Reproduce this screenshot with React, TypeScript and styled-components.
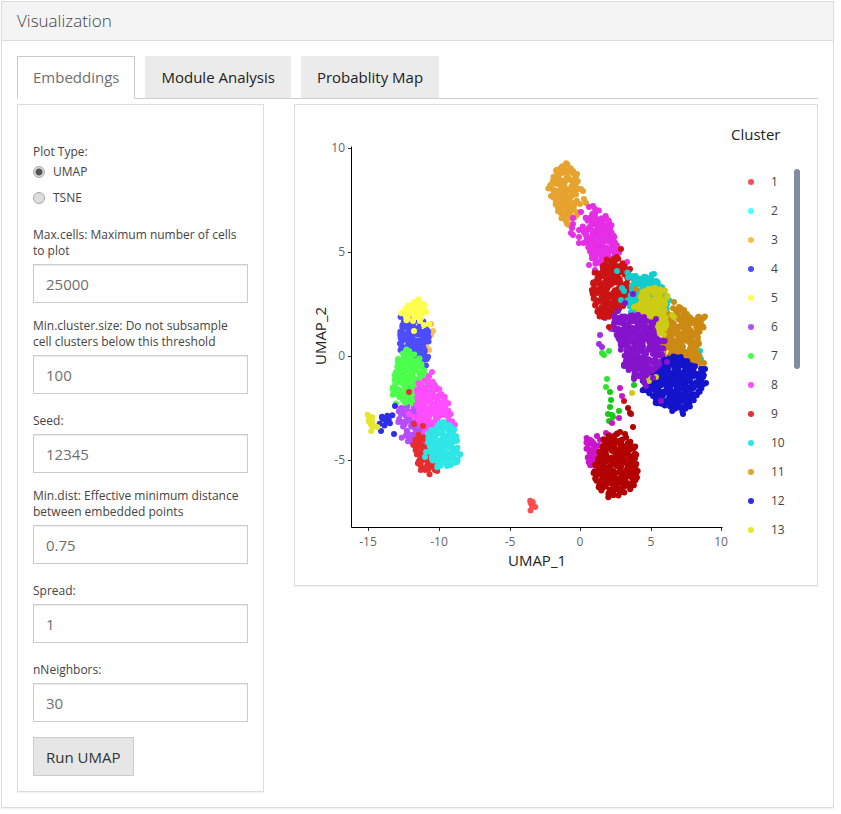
import React, { useState } from "react";
import styled, { createGlobalStyle } from "styled-components";

const GlobalStyle = createGlobalStyle`
  *, *::before, *::after { box-sizing: border-box; }
  body {
    margin: 0;
    background: #ffffff;
    color: #444444;
    font-family: "Open Sans", "Noto Sans", sans-serif;
    font-size: 12px;
    line-height: 16px;
  }
`;

const Panel = styled.section`
  margin: 1px 7px 6px 1px;
  border: 1px solid #dddddd;
  background: #ffffff;
  box-shadow: 0 1px 1px rgba(0, 0, 0, 0.05);
`;

const PanelHeader = styled.header`
  padding: 8px 15px 9px;
  border-bottom: 1px solid #dddddd;
  background: #f4f4f4;
`;

const PanelTitle = styled.h1`
  margin: 0;
  color: #444444;
  font-size: 17px;
  font-weight: 300;
  line-height: 21px;
`;

const PanelBody = styled.div`
  padding: 15px;
`;

const Tabs = styled.div`
  display: flex;
  gap: 10px;
  margin-bottom: 5px;
  border-bottom: 1px solid #cccccc;
`;

const Tab = styled.button<{ $active: boolean }>`
  height: 43px;
  margin-bottom: -1px;
  padding: 0 15px;
  border: 1px solid ${(p) => (p.$active ? "#cccccc" : "#ebebeb")};
  border-bottom-color: ${(p) => (p.$active ? "#ffffff" : "#cccccc")};
  background: ${(p) => (p.$active ? "#ffffff" : "#ebebeb")};
  color: ${(p) => (p.$active ? "#6f6f6f" : "#222222")};
  font-family: inherit;
  font-size: 15px;
  line-height: 21px;
  cursor: pointer;
`;

const Columns = styled.div`
  display: flex;
  align-items: flex-start;
  gap: 30px;
`;

const Card = styled.div`
  border: 1px solid #dddddd;
  background: #ffffff;
  box-shadow: 0 1px 1px rgba(0, 0, 0, 0.05);
`;

const FormCard = styled(Card)`
  flex: 0 0 247px;
  padding: 39px 15px 15px;
`;

const ChartCard = styled(Card)`
  flex: 1;
  min-width: 0;
  display: flex;
  align-items: flex-start;
`;

const RadioGroup = styled.fieldset`
  margin: 0 0 11px;
  padding: 0;
  border: 0;
`;

const Legend = styled.legend`
  padding: 0;
  margin-bottom: 4px;
`;

const RadioLabel = styled.label`
  display: flex;
  align-items: center;
  gap: 8px;
  height: 16px;
  margin-bottom: 10px;
`;

const Radio = styled.input`
  appearance: none;
  width: 12px;
  height: 12px;
  margin: 0;
  border: 1px solid #a6a6a6;
  border-radius: 50%;
  background: #dedede;

  &:checked {
    background: radial-gradient(circle, #555555 0 3px, #dedede 4px);
  }
`;

const Field = styled.div`
  margin-bottom: 15px;
`;

const FieldLabel = styled.label`
  display: flex;
  align-items: flex-end;
  min-height: 20px;
  margin-bottom: 5px;
`;

const TextBox = styled.input`
  display: block;
  width: 100%;
  height: 39px;
  padding: 8px 12px;
  border: 1px solid #cccccc;
  border-radius: 0;
  box-shadow: inset 0 1px 1px rgba(0, 0, 0, 0.08);
  color: #6f6f6f;
  font-family: inherit;
  font-size: 15px;
`;

const RunButton = styled.button`
  height: 39px;
  padding: 0 12px;
  border: 1px solid #cccccc;
  background: #e6e6e6;
  color: #333333;
  font-family: inherit;
  font-size: 15px;
  cursor: pointer;
`;

const Plot = styled.svg`
  flex: 1;
  min-width: 0;
  height: auto;
  display: block;
`;

const TickText = styled.text`
  fill: #666666;
  font-size: 12px;
`;

const AxisTitle = styled.text`
  fill: #222222;
  font-size: 15px;
`;

const LegendPanel = styled.aside`
  flex: 0 0 86px;
  padding-top: 19px;
`;

const LegendTitle = styled.h2`
  margin: 0 0 23px;
  color: #222222;
  font-size: 15px;
  font-weight: 400;
  line-height: 20px;
`;

const LegendScroll = styled.div`
  display: flex;
  justify-content: space-between;
  align-items: flex-start;
  padding: 0 17px;
`;

const LegendList = styled.ul`
  margin: 0;
  padding: 0;
  list-style: none;
`;

const LegendItem = styled.li`
  display: flex;
  align-items: center;
  gap: 17px;
  height: 29px;
  color: #444444;
`;

const LegendDot = styled.span<{ $color: string }>`
  width: 6px;
  height: 6px;
  border-radius: 50%;
  background: ${(p) => p.$color};
`;

const ScrollThumb = styled.div`
  width: 6px;
  height: 200px;
  margin-top: 2px;
  border-radius: 3px;
  background: #808ba4;
`;

type Pt = [number, number];
type Cluster = { color: string; outline?: Pt[]; points?: Pt[] };

const clusters: Cluster[] = [
  { color: "#ff4d4d", outline: [[530, 500], [531, 510], [535, 508], [533, 503]], points: [[532, 506], [532, 504]] },
  { color: "#ffbb4d", points: [[431, 324], [433, 331], [431, 335], [427, 348], [429, 350]] },
  {
    color: "#4d4dff",
    outline: [[402, 318], [400, 337], [401, 349], [410, 358], [427, 365], [428, 357], [425, 350], [429, 343], [429, 330], [423, 320]],
  },
  {
    color: "#ffff4d",
    outline: [[418, 298], [425, 305], [426, 313], [420, 318], [407, 319], [402, 312], [408, 305], [413, 303]],
    points: [[413, 321], [414, 331], [420, 321], [424, 325], [429, 324]],
  },
  {
    color: "#b84dff",
    outline: [[398, 412], [402, 408], [413, 403], [418, 412], [425, 427], [428, 437], [423, 443], [410, 443], [402, 439], [407, 432], [399, 422]],
  },
  {
    color: "#4dff4d",
    outline: [[405, 349], [403, 355], [398, 360], [395, 374], [392, 388], [396, 403], [405, 403], [417, 403], [425, 383], [425, 375], [422, 363], [415, 355]],
  },
  {
    color: "#ff4dff",
    outline: [[427, 378], [418, 382], [416, 391], [418, 403], [418, 420], [427, 442], [437, 430], [454, 426], [450, 415], [447, 404], [440, 388]],
    points: [[432, 372], [429, 376], [416, 405], [409, 414], [414, 417]],
  },
  {
    color: "#e62e2e",
    outline: [[413, 446], [420, 436], [430, 435], [432, 453], [437, 470], [429, 473], [420, 470], [417, 455]],
    points: [[409, 392], [414, 424], [423, 426]],
  },
  {
    color: "#2ee6e6",
    outline: [[444, 421], [454, 428], [457, 442], [460, 454], [457, 462], [440, 467], [436, 467], [427, 452], [427, 435], [438, 424]],
    points: [[425, 457]],
  },
  {
    color: "#e6a32e",
    outline: [[567, 164], [573, 170], [577, 181], [578, 190], [577, 201], [572, 211], [568, 226], [563, 218], [555, 203], [549, 188], [553, 177], [556, 169]],
    points: [[577, 174], [583, 191], [584, 199], [586, 203], [580, 204], [577, 212], [577, 215], [575, 217], [581, 189]],
  },
  {
    color: "#2e2ee6",
    outline: [[381, 417], [391, 414], [389, 422], [384, 426], [380, 423]],
    points: [[395, 406], [394, 434], [381, 431]],
  },
  { color: "#e6e62e", outline: [[369, 415], [368, 420], [372, 430], [376, 426], [372, 417]] },
  {
    color: "#e62ee6",
    outline: [[598, 212], [605, 215], [610, 225], [614, 237], [620, 253], [612, 260], [596, 264], [590, 253], [585, 242], [583, 225], [586, 217]],
    points: [[589, 207], [593, 206], [595, 209], [581, 212], [573, 218], [573, 224], [572, 228], [571, 233], [573, 235], [579, 230], [579, 237], [579, 243], [589, 265], [627, 262], [595, 270]],
  },
  { color: "#a32ee6", points: [[605, 318], [600, 335], [599, 344], [602, 347], [611, 329]] },
  { color: "#2ee62e", points: [[602, 353], [604, 355], [609, 351], [607, 379], [606, 387]] },
  {
    color: "#cc1414",
    outline: [[618, 257], [622, 262], [627, 272], [630, 287], [628, 300], [617, 312], [610, 317], [599, 317], [595, 307], [592, 290], [596, 273], [608, 261]],
    points: [[621, 249], [609, 327], [630, 269], [624, 401]],
  },
  {
    color: "#14cccc",
    outline: [[628, 273], [637, 276], [653, 275], [658, 282], [663, 286], [668, 300], [667, 317], [633, 317], [628, 300], [633, 290]],
    points: [[617, 271], [622, 288], [624, 291], [621, 300], [701, 359], [700, 351], [654, 274]],
  },
  {
    color: "#cc8a14",
    outline: [[674, 309], [679, 308], [690, 316], [705, 317], [703, 327], [698, 335], [700, 343], [697, 350], [700, 362], [693, 365], [667, 357], [662, 347], [667, 313]],
    points: [[674, 302], [679, 307], [684, 310], [704, 363], [636, 289]],
  },
  { color: "#14cc14", points: [[610, 392], [611, 400], [610, 407], [634, 385], [608, 414], [612, 415], [613, 417], [619, 411], [609, 421]] },
  {
    color: "#1414cc",
    outline: [[680, 356], [695, 365], [704, 370], [705, 383], [697, 396], [690, 406], [683, 411], [673, 410], [657, 404], [655, 393], [642, 391], [644, 382], [660, 362], [664, 359]],
    points: [[705, 369], [683, 414], [653, 396]],
  },
  {
    color: "#cccc14",
    outline: [[638, 305], [643, 290], [655, 288], [666, 290], [668, 297], [663, 310], [667, 327], [663, 335], [647, 333], [640, 317]],
    points: [[634, 307], [672, 315], [674, 317], [660, 348], [662, 351], [648, 377], [649, 381], [656, 377], [632, 393], [629, 356]],
  },
  {
    color: "#8514cc",
    outline: [[615, 316], [637, 314], [652, 322], [655, 338], [665, 340], [660, 363], [652, 372], [642, 378], [633, 378], [625, 365], [625, 355], [617, 338], [613, 323]],
    points: [[633, 294], [625, 303], [618, 311], [656, 319], [667, 362], [653, 378], [646, 386], [661, 401], [644, 382], [624, 366], [634, 379]],
  },
  {
    color: "#cc14cc",
    outline: [[588, 438], [597, 445], [600, 458], [595, 472], [589, 464], [587, 457], [586, 443]],
    points: [[620, 388], [622, 396], [619, 418], [612, 423], [606, 433], [609, 435], [597, 436], [600, 440], [614, 437]],
  },
  {
    color: "#b30000",
    outline: [[616, 435], [625, 438], [634, 447], [637, 463], [637, 479], [629, 490], [618, 495], [607, 496], [598, 487], [594, 472], [600, 452], [604, 439]],
    points: [[628, 408], [630, 413], [631, 414], [633, 427], [620, 432], [625, 434], [617, 434]],
  },
];

const legendColors = [
  "#ff4d4d", "#4dffff", "#ffbb4d", "#4d4dff", "#ffff4d", "#b84dff", "#4dff4d",
  "#ff4dff", "#e62e2e", "#2ee6e6", "#e6a32e", "#2e2ee6", "#e6e62e",
];

function seeded(seed: number) {
  let s = seed;
  return () => {
    s = (s * 1664525 + 1013904223) % 4294967296;
    return s / 4294967296;
  };
}

function inside([x, y]: Pt, poly: Pt[]) {
  let hit = false;
  for (let i = 0, j = poly.length - 1; i < poly.length; j = i++) {
    const [xi, yi] = poly[i];
    const [xj, yj] = poly[j];
    if (yi > y !== yj > y && x < ((xj - xi) * (y - yi)) / (yj - yi) + xi) hit = !hit;
  }
  return hit;
}

/* Scatters cells through a cluster's outline, with a looser row along its edge. */
function scatter(cluster: Cluster, seed: number): Pt[] {
  const result: Pt[] = [...(cluster.points ?? [])];
  const poly = cluster.outline;
  if (!poly) return result;
  const rnd = seeded(seed);
  const xs = poly.map((p) => p[0]);
  const ys = poly.map((p) => p[1]);
  const step = 3;
  for (let y = Math.min(...ys); y <= Math.max(...ys); y += step) {
    for (let x = Math.min(...xs); x <= Math.max(...xs); x += step) {
      const p: Pt = [x + (rnd() - 0.5) * 7, y + (rnd() - 0.5) * 7];
      if (inside(p, poly)) result.push(p);
    }
  }
  poly.forEach(([x, y], i) => {
    const [nx, ny] = poly[(i + 1) % poly.length];
    const n = Math.max(1, Math.round(Math.hypot(nx - x, ny - y) / 7));
    for (let k = 0; k < n; k++) {
      const t = k / n;
      result.push([x + (nx - x) * t + (rnd() - 0.5) * 3, y + (ny - y) * t + (rnd() - 0.5) * 3]);
    }
  });
  return result;
}

const clusterDots = clusters.map((c, i) => ({ color: c.color, dots: scatter(c, 97 + i * 131) }));

const xTicks: [number, string][] = [[368, "-15"], [439, "-10"], [510, "-5"], [580, "0"], [651, "5"], [721, "10"]];
const yTicks: [number, string][] = [[148, "10"], [252, "5"], [356, "0"], [460, "-5"]];

function UmapPlot() {
  return (
    <Plot viewBox="295 105 436 480" role="img" aria-label="UMAP scatter plot of cell clusters">
      <path d="M351 146V527H722" transform="translate(0.5 0.5)" fill="none" stroke="#000000" />
      {xTicks.map(([x, label]) => (
        <g key={label}>
          <rect x={x} y={528} width={1} height={3} fill="#333333" />
          <TickText x={x} y={546} textAnchor="middle">{label}</TickText>
        </g>
      ))}
      {yTicks.map(([y, label]) => (
        <g key={label}>
          <rect x={348} y={y} width={3} height={1} fill="#333333" />
          <TickText x={345} y={y + 4} textAnchor="end">{label}</TickText>
        </g>
      ))}
      <AxisTitle x={537} y={566} textAnchor="middle">UMAP_1</AxisTitle>
      <AxisTitle transform="translate(326 336) rotate(-90)" textAnchor="middle">UMAP_2</AxisTitle>
      {clusterDots.map(({ color, dots }, i) => (
        <g key={i} fill={color}>
          {dots.map(([x, y], k) => (
            <circle key={k} cx={x} cy={y} r={3} />
          ))}
        </g>
      ))}
    </Plot>
  );
}

const tabs = ["Embeddings", "Module Analysis", "Probablity Map"];

const fields = [
  { id: "max-cells", label: "Max.cells: Maximum number of cells to plot", value: "25000" },
  { id: "min-cluster", label: "Min.cluster.size: Do not subsample cell clusters below this threshold", value: "100" },
  { id: "seed", label: "Seed:", value: "12345" },
  { id: "min-dist", label: "Min.dist: Effective minimum distance between embedded points", value: "0.75" },
  { id: "spread", label: "Spread:", value: "1" },
  { id: "neighbors", label: "nNeighbors:", value: "30" },
];

export default function App() {
  const [tab, setTab] = useState(tabs[0]);
  return (
    <>
      <GlobalStyle />
      <Panel>
        <PanelHeader>
          <PanelTitle>Visualization</PanelTitle>
        </PanelHeader>
        <PanelBody>
          <Tabs role="tablist">
            {tabs.map((name) => (
              <Tab key={name} type="button" role="tab" aria-selected={tab === name} $active={tab === name} onClick={() => setTab(name)}>
                {name}
              </Tab>
            ))}
          </Tabs>
          <Columns>
            <FormCard as="form" onSubmit={(e: React.FormEvent) => e.preventDefault()}>
              <RadioGroup>
                <Legend>Plot Type:</Legend>
                <RadioLabel>
                  <Radio type="radio" name="plot-type" value="umap" defaultChecked />
                  UMAP
                </RadioLabel>
                <RadioLabel>
                  <Radio type="radio" name="plot-type" value="tsne" />
                  TSNE
                </RadioLabel>
              </RadioGroup>
              {fields.map((f) => (
                <Field key={f.id}>
                  <FieldLabel htmlFor={f.id}>{f.label}</FieldLabel>
                  <TextBox id={f.id} type="text" defaultValue={f.value} />
                </Field>
              ))}
              <RunButton type="submit">Run UMAP</RunButton>
            </FormCard>
            <ChartCard>
              <UmapPlot />
              <LegendPanel>
                <LegendTitle>Cluster</LegendTitle>
                <LegendScroll>
                  <LegendList>
                    {legendColors.map((color, i) => (
                      <LegendItem key={color}>
                        <LegendDot $color={color} />
                        {i + 1}
                      </LegendItem>
                    ))}
                  </LegendList>
                  <ScrollThumb />
                </LegendScroll>
              </LegendPanel>
            </ChartCard>
          </Columns>
        </PanelBody>
      </Panel>
    </>
  );
}
